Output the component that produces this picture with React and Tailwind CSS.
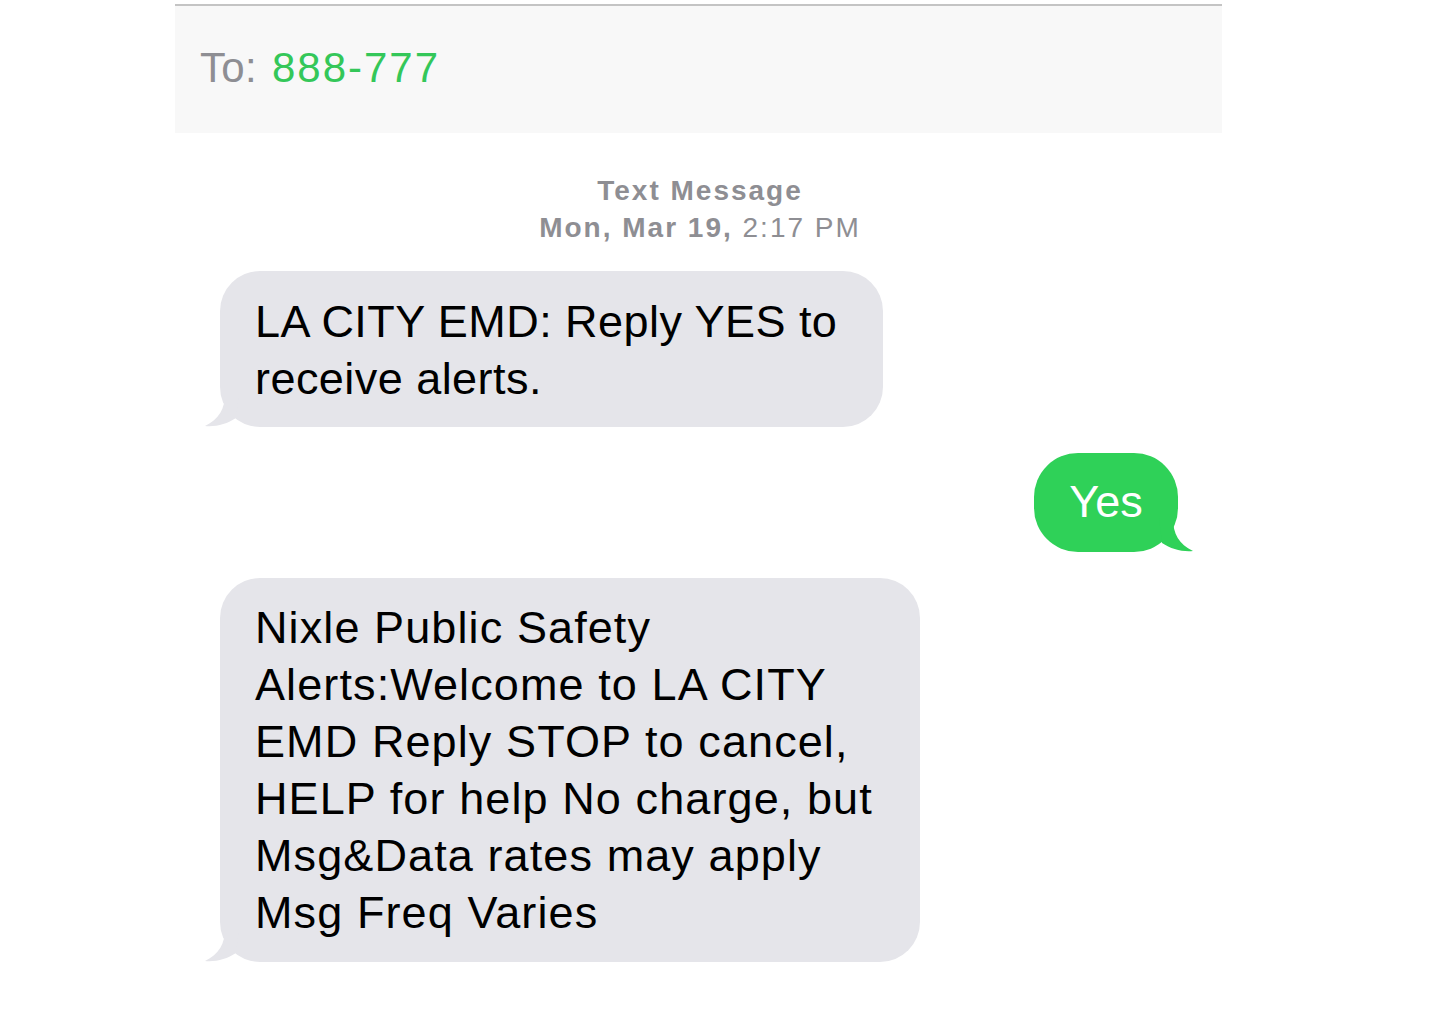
function Tail({ side, color }) {
    // iOS 风格气泡尾巴
    const pos = side === "left" ? "-left-[15px]" : "-right-[15px] -scale-x-100"
    return (
        <svg width="34" height="34" viewBox="0 0 34 34" className={`absolute bottom-0 ${pos}`}>
            <path d="M20 0 C20 16 14 26 0 33 C11 34 22 31 31 25 L34 0 Z" fill={color} />
        </svg>
    )
}

export default function App() {
    return (
        <div className="min-h-[1010px] bg-white font-['Liberation_Sans',Arial,sans-serif]">
            <div className="ml-[175px] w-[1047px] pt-[4px]">
                {/* 收件人 */}
                <div className="h-[129px] border-t-2 border-[#c4c4c4] bg-[#f8f8f8] flex items-center pl-[25px] pb-[4px] text-[42px]">
                    <span className="text-[#8e8e93] tracking-[0.3px]">To:</span>
                    <span className="ml-[15px] text-[#34c759] tracking-[2px]">888-777</span>
                </div>

                {/* 时间 */}
                <div className="mt-[39px] text-center text-[#8e8e93] text-[28px] leading-[37px] tracking-[2px] pl-[3px]">
                    <div className="font-bold">Text Message</div>
                    <div><span className="font-bold">Mon, Mar 19,</span> 2:17 PM</div>
                </div>

                {/* 消息 */}
                <div className="mt-[25px] flex flex-col gap-[26px]">
                    <div className="relative ml-[45px] w-[663px] rounded-[40px] bg-[#e5e5ea] pl-[35px] pt-[22px] pb-[20px] text-[45px] leading-[57px] text-black tracking-[0.45px]">
                        LA CITY EMD: Reply YES to<br />receive alerts.
                        <Tail side="left" color="#e5e5ea" />
                    </div>

                    <div className="self-end mr-[44px] relative w-[144px] h-[99px] rounded-[44px] bg-[#2fd158] flex items-center justify-center pb-[2px] text-[45px] text-white">
                        Yes
                        <Tail side="right" color="#2fd158" />
                    </div>

                    <div className="relative ml-[45px] w-[700px] rounded-[40px] bg-[#e5e5ea] pl-[35px] pt-[21px] pb-[21px] text-[45px] leading-[57px] text-black tracking-[1.1px]">
                        Nixle Public Safety<br />
                        Alerts:Welcome to LA CITY<br />
                        EMD Reply STOP to cancel,<br />
                        HELP for help No charge, but<br />
                        Msg&amp;Data rates may apply<br />
                        Msg Freq Varies
                        <Tail side="left" color="#e5e5ea" />
                    </div>
                </div>
            </div>
        </div>
    )
}
